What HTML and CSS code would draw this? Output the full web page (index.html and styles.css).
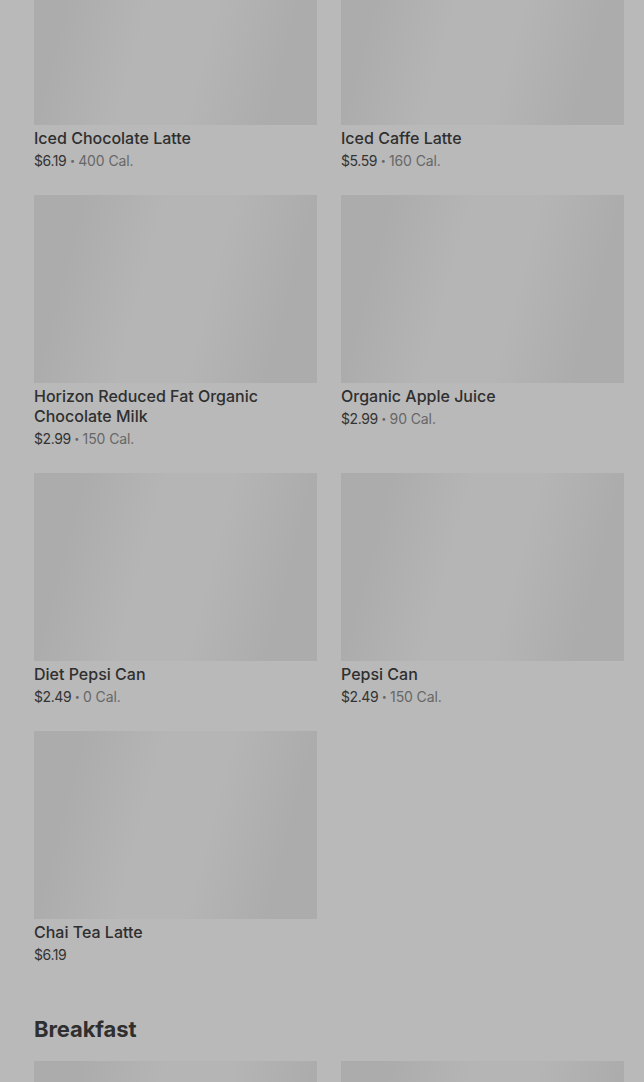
FILE: index.html
```html
<!DOCTYPE html>
<html lang="en">
  <head>
    <meta charset="UTF-8" />
    <meta name="viewport" content="width=device-width, initial-scale=1.0" />
    <title>Menu</title>
    <link rel="stylesheet" href="styles.css">
  </head>

  <body>
    <div class="menu">
      <div class="menu-grid menu-grid--first">
        <div class="item">
          <div class="item-pic"></div>
          <div class="item-name">Iced Chocolate Latte</div>
          <div class="item-price">$6.19 <span class="dot">•</span> <span class="cal">400 Cal.</span></div>
        </div>
        <div class="item">
          <div class="item-pic"></div>
          <div class="item-name">Iced Caffe Latte</div>
          <div class="item-price">$5.59 <span class="dot">•</span> <span class="cal">160 Cal.</span></div>
        </div>
        <div class="item">
          <div class="item-pic"></div>
          <div class="item-name">Horizon Reduced Fat Organic Chocolate Milk</div>
          <div class="item-price">$2.99 <span class="dot">•</span> <span class="cal">150 Cal.</span></div>
        </div>
        <div class="item">
          <div class="item-pic"></div>
          <div class="item-name">Organic Apple Juice</div>
          <div class="item-price">$2.99 <span class="dot">•</span> <span class="cal">90 Cal.</span></div>
        </div>
        <div class="item">
          <div class="item-pic"></div>
          <div class="item-name">Diet Pepsi Can</div>
          <div class="item-price">$2.49 <span class="dot">•</span> <span class="cal">0 Cal.</span></div>
        </div>
        <div class="item">
          <div class="item-pic"></div>
          <div class="item-name">Pepsi Can</div>
          <div class="item-price">$2.49 <span class="dot">•</span> <span class="cal">150 Cal.</span></div>
        </div>
        <div class="item">
          <div class="item-pic"></div>
          <div class="item-name">Chai Tea Latte</div>
          <div class="item-price">$6.19</div>
        </div>
      </div>

      <h2 class="section-title">Breakfast</h2>

      <div class="menu-grid">
        <div class="item">
          <div class="item-pic"></div>
        </div>
        <div class="item">
          <div class="item-pic"></div>
        </div>
      </div>
    </div>
  </body>
</html>
```

FILE: styles.css
```css
:root {
  --bg: #b9b9b9;
  --pic: #acacac;
  --pic-light: #b5b5b5;
  --text: #2f2f2f;
  --muted: #676767;
}
* {
  box-sizing: border-box;
}
html,
body {
  margin: 0;
  height: 100%;
  overflow: hidden;
  background: var(--bg);
}
body {
  font-family: Inter, "Noto Sans", sans-serif;
  color: var(--text);
}

.menu {
  padding: 0 20px 0 34px;
}

.menu-grid {
  display: grid;
  grid-template-columns: 1fr 1fr;
  column-gap: 24px;
  row-gap: 24px;
}
.menu-grid--first {
  margin-top: -63px;
}

.item-pic {
  height: 188px;
  background: linear-gradient(
    105deg,
    var(--pic) 15%,
    var(--pic-light) 40%,
    var(--pic-light) 60%,
    var(--pic) 85%
  );
}
.item-name {
  margin-top: 3px;
  font-size: 16px;
  line-height: 20px;
  font-weight: 500;
  padding-right: 40px;
}
.item-price {
  margin-top: 2px;
  font-size: 14px;
  line-height: 21px;
  color: #333;
  letter-spacing: -0.4px;
}
.dot {
  font-size: 9px;
  color: var(--muted);
  vertical-align: 2px;
}
.cal {
  color: var(--muted);
  letter-spacing: -0.1px;
}

.section-title {
  margin: 48px 0 16px;
  font-size: 22px;
  line-height: 32px;
  font-weight: 700;
  letter-spacing: -0.1px;
}
```
